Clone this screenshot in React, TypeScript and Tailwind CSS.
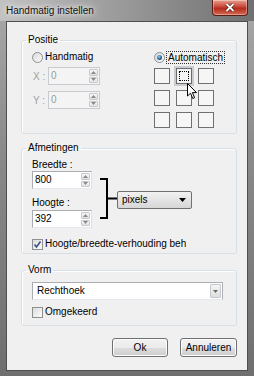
import type { ReactNode } from "react";

function Radio({ checked }: { checked?: boolean }) {
  return (
    <span className="flex h-[11px] w-[11px] shrink-0 items-center justify-center rounded-full border border-[#8e8f8f] bg-[linear-gradient(135deg,#d9d9d9,#fbfbfb)]">
      {checked && (
        <span className="h-[5px] w-[5px] rounded-full bg-[radial-gradient(circle_at_40%_35%,#8fd0f0,#1b5f8e_60%,#0b3556)]" />
      )}
    </span>
  );
}

function Check({ checked }: { checked?: boolean }) {
  return (
    <span className="flex h-[11px] w-[11px] shrink-0 items-center justify-center border border-[#8e8f8f] bg-[linear-gradient(135deg,#dcdcdc,#fdfdfd)]">
      {checked && (
        <svg width="9" height="9" viewBox="0 0 9 9">
          <path d="M1.5 4.5 L3.5 7 L7.5 1.5" fill="none" stroke="#3b4f8a" strokeWidth="1.6" />
        </svg>
      )}
    </span>
  );
}

function SpinArrow({ up }: { up?: boolean }) {
  return (
    <span className="flex flex-1 items-center justify-center rounded-[1px] border border-[#c5c9cf] bg-[linear-gradient(#f7f7f7,#e2e2e2)]">
      <svg width="5" height="3" viewBox="0 0 5 3">
        <path d={up ? "M0 3 L2.5 0 L5 3 Z" : "M0 0 L2.5 3 L5 0 Z"} fill="#8a8a8a" />
      </svg>
    </span>
  );
}

function Spin({ value, disabled, width }: { value: string; disabled?: boolean; width: string }) {
  return (
    <div
      className={`flex h-[18px] ${width} border ${
        disabled
          ? "border-[#c8ccd1] bg-[#f4f4f4] text-[#9c9c9c]"
          : "border-[#abadb3] border-r-[#dbdfe6] border-b-[#e3e9ef] bg-white text-black"
      }`}
    >
      <span className="flex-1 pl-[2px] leading-[16px]">{value}</span>
      <div className="flex w-[10px] flex-col gap-px py-px pr-px">
        <SpinArrow up />
        <SpinArrow />
      </div>
    </div>
  );
}

function Group({ title, height, children }: { title: string; height: string; children: ReactNode }) {
  return (
    <fieldset className={`${height} rounded-[3px] border border-[#d5dfe5] shadow-[inset_1px_1px_0_#fff]`}>
      <legend className="ml-[4px] px-[2px] leading-[14px] text-black">{title}</legend>
      <div className="pl-[10px]">{children}</div>
    </fieldset>
  );
}

function Button({ label, width }: { label: string; width: string }) {
  return (
    <button
      className={`h-[19px] ${width} rounded-[3px] border border-[#707070] bg-[linear-gradient(#f2f2f2_0%,#ebebeb_50%,#dddddd_51%,#cfcfcf_100%)] leading-[17px] text-black shadow-[inset_0_0_0_1px_#fcfcfc]`}
    >
      {label}
    </button>
  );
}

export default function App() {
  const cells = [0, 1, 2, 3, 4, 5, 6, 7, 8];

  return (
    <div className="flex h-[376px] w-[254px] flex-col bg-[linear-gradient(#a9a9a9,#8a8a8a_40%,#6f6f6f)] font-['Liberation_Sans',Arial,sans-serif] text-[10px] text-black">
      {/* title bar */}
      <div className="flex h-[21px] items-start bg-[linear-gradient(90deg,#c2c2c2,#9c9c9c_45%,#707070)]">
        <span className="pl-[6px] pt-[4px] leading-[14px] text-[#111] [text-shadow:0_0_5px_#fff,0_0_9px_#fff]">
          Handmatig instellen
        </span>
        <span className="ml-auto mr-[6px] flex h-[16px] w-[36px] items-center justify-center rounded-b-[4px] border border-t-0 border-[#5a1d14] bg-[linear-gradient(#e8a08f,#c8473a_45%,#b52a1c_55%,#d26a52)] shadow-[inset_0_0_0_1px_rgba(255,255,255,0.35)]">
          <svg width="10" height="9" viewBox="0 0 10 9">
            <path d="M1.5 1 L8.5 8 M8.5 1 L1.5 8" stroke="#4a1a12" strokeWidth="3.2" />
            <path d="M1.5 1 L8.5 8 M8.5 1 L1.5 8" stroke="#fff" strokeWidth="1.8" />
          </svg>
        </span>
      </div>

      {/* client area */}
      <div className="mx-[6px] mb-[5px] flex flex-1 flex-col border border-[#4f4f4f] bg-[#f0f0f0] pl-[14px] pr-[10px] pt-[11px]">
        <Group title="Positie" height="h-[101px]">
          <div className="mt-[4px] flex">
            <div className="w-[122px]">
              <div className="flex h-[12px] items-center gap-[2px]">
                <Radio />
                <span className="leading-[12px]">Handmatig</span>
              </div>
              <div className="mt-[4px] flex items-center">
                <span className="w-[16px] pl-[1px] text-[#a0a0a0]">X :</span>
                <Spin value="0" disabled width="w-[52px]" />
              </div>
              <div className="mt-[6px] flex items-center">
                <span className="w-[16px] pl-[1px] text-[#a0a0a0]">Y :</span>
                <Spin value="0" disabled width="w-[52px]" />
              </div>
            </div>
            <div className="relative">
              <div className="flex h-[12px] items-center gap-px">
                <Radio checked />
                <span className="border border-dotted border-[#333] px-px leading-[11px]">Automatisch</span>
              </div>
              <div className="mt-[5px] grid grid-cols-[16px_16px_16px] gap-[6px]">
                {cells.map((i) => (
                  <span
                    key={i}
                    className={`flex h-[16px] w-[16px] items-center justify-center border ${
                      i === 1
                        ? "border-[#6b6b6b] bg-[#f4f4f4] shadow-[0_0_0_2px_#c9ccd0]"
                        : "border-[#707070] bg-[#f6f6f6]"
                    }`}
                  >
                    {i === 1 && <span className="h-[10px] w-[10px] border border-dotted border-black" />}
                  </span>
                ))}
              </div>
              {/* mouse cursor */}
              <svg className="absolute left-[33px] top-[32px]" width="11" height="17" viewBox="0 0 11 17">
                <path
                  d="M0.5 0.5 L0.5 13 L3.5 10.2 L5.7 15.5 L7.6 14.7 L5.4 9.6 L9.5 9.6 Z"
                  fill="#fff"
                  stroke="#000"
                  strokeWidth="1"
                  strokeLinejoin="round"
                />
              </svg>
            </div>
          </div>
        </Group>

        <div className="mt-[7px]">
          <Group title="Afmetingen" height="h-[113px]">
            <div className="mt-[3px] flex items-start">
              <div className="w-[60px]">
                <div className="leading-[13px]">Breedte :</div>
                <Spin value="800" width="w-[60px]" />
                <div className="mt-[7px] leading-[13px]">Hoogte :</div>
                <div className="mt-px">
                  <Spin value="392" width="w-[60px]" />
                </div>
              </div>
              <svg className="ml-[8px] mt-[20px]" width="17" height="41" viewBox="0 0 17 41">
                <path d="M0 1 H7 V40 H0 M7 20.5 H17" fill="none" stroke="#000" strokeWidth="2" />
              </svg>
              <div className="mt-[33px] flex h-[18px] w-[75px] items-center rounded-[2px] border border-[#707070] bg-[linear-gradient(#f2f2f2,#e4e4e4_50%,#d6d6d6)] pl-[4px] pr-[5px]">
                <span className="flex-1 leading-[16px]">pixels</span>
                <svg width="7" height="4" viewBox="0 0 7 4">
                  <path d="M0 0 H7 L3.5 4 Z" fill="#000" />
                </svg>
              </div>
            </div>
            <div className="mt-[10px] flex h-[12px] items-center gap-[2px] whitespace-nowrap">
              <Check checked />
              <span className="w-[141px] overflow-hidden leading-[12px]">Hoogte/breedte-verhouding behouden</span>
            </div>
          </Group>
        </div>

        <div className="mt-[9px]">
          <Group title="Vorm" height="h-[63px]">
            <div className="mt-[5px] flex h-[18px] w-[191px] items-center border border-[#abadb3] border-b-[#e3e9ef] bg-white pl-[4px] pr-px">
              <span className="flex-1 leading-[16px]">Rechthoek</span>
              <span className="flex h-[14px] w-[11px] items-center justify-center rounded-[1px] border border-[#c5c9cf] bg-[linear-gradient(#f5f5f5,#dedede)]">
                <svg width="5" height="3" viewBox="0 0 5 3">
                  <path d="M0 0 L2.5 3 L5 0 Z" fill="#6a6a6a" />
                </svg>
              </span>
            </div>
            <div className="mt-[6px] flex h-[12px] items-center gap-[2px]">
              <Check />
              <span className="leading-[12px]">Omgekeerd</span>
            </div>
          </Group>
        </div>

        <div className="mt-[12px] flex justify-end gap-[12px]">
          <Button label="Ok" width="w-[56px]" />
          <Button label="Annuleren" width="w-[57px]" />
        </div>
      </div>
    </div>
  );
}
